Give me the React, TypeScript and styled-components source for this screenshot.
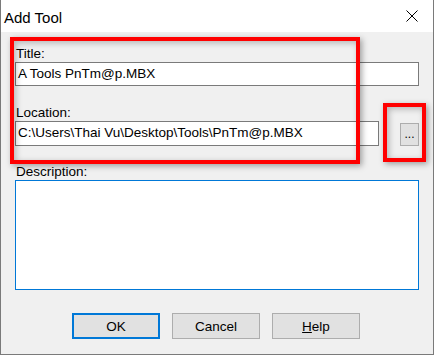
import React from "react";
import styled, { createGlobalStyle } from "styled-components";

const Global = createGlobalStyle`
  html, body { margin: 0; padding: 0; background: #f0f0f0; }
  body { font-family: "Liberation Sans", Arial, sans-serif; }
`;

const Window = styled.div`
  position: relative;
  width: 434px;
  height: 355px;
  box-sizing: border-box;
  border: 1px solid #7a7a7a;
  border-top: none;
  background: #f0f0f0;
  display: flex;
  flex-direction: column;
  overflow: hidden;
`;

const TitleBar = styled.div`
  height: 32px;
  flex: none;
  background: #ffffff;
  display: flex;
  align-items: center;
  justify-content: space-between;
  padding: 0 15px 0 3px;
  box-sizing: border-box;
`;

const TitleText = styled.span`
  font-family: "Liberation Sans", Arial, sans-serif;
  font-size: 15px;
  color: #000;
  padding-top: 2px;
`;

const Body = styled.div`
  flex: 1;
  display: flex;
  flex-direction: column;
  padding: 14px 14px 0 14px;
  font-size: 13.5px;
  color: #000;
`;

const Label = styled.div<{ $gap?: number }>`
  height: 16px;
  line-height: 16px;
  margin-top: ${(p) => p.$gap ?? 0}px;
  padding-left: 1px;
`;

const Row = styled.div`
  display: flex;
  align-items: flex-start;
  gap: 21px;
`;

const TextBox = styled.div<{ $w?: number; $h?: number; $focus?: boolean }>`
  box-sizing: border-box;
  width: ${(p) => (p.$w ? `${p.$w}px` : "100%")};
  height: ${(p) => p.$h ?? 24}px;
  background: #fff;
  border: 1px solid ${(p) => (p.$focus ? "#0078d7" : "#7a7a7a")};
  line-height: 21px;
  padding-left: 2px;
  white-space: nowrap;
  overflow: hidden;
`;

const SmallButton = styled.div`
  box-sizing: border-box;
  width: 19px;
  height: 23px;
  margin-top: 2px;
  background: #e1e1e1;
  border: 1px solid #adadad;
  font-size: 12px;
  text-align: center;
  line-height: 20px;
`;

const ButtonRow = styled.div`
  display: flex;
  justify-content: center;
  gap: 12px;
  margin-top: 23px;
  padding-right: 2px;
`;

const Button = styled.div<{ $default?: boolean }>`
  box-sizing: border-box;
  width: 88px;
  height: 26px;
  background: #e1e1e1;
  border: ${(p) => (p.$default ? "2px solid #0078d7" : "1px solid #adadad")};
  display: flex;
  align-items: center;
  justify-content: center;
`;

const Underline = styled.span`
  text-decoration: underline;
`;

const Highlight = styled.div<{ $x: number; $y: number; $w: number; $h: number }>`
  position: absolute;
  left: ${(p) => p.$x}px;
  top: ${(p) => p.$y}px;
  width: ${(p) => p.$w}px;
  height: ${(p) => p.$h}px;
  box-sizing: border-box;
  border: 4px solid #ff0000;
  box-shadow: 2px 2px 6px rgba(0, 0, 0, 0.35), inset 2px 2px 6px rgba(0, 0, 0, 0.25);
  pointer-events: none;
`;

const CloseIcon = () => (
  <svg width="12" height="12" viewBox="0 0 12 12">
    <path d="M0.5 0.5 L11.5 11.5 M11.5 0.5 L0.5 11.5" stroke="#000" strokeWidth="1" fill="none" />
  </svg>
);

export default function App() {
  return (
    <>
      <Global />
      <Window>
        <TitleBar>
          <TitleText>Add Tool</TitleText>
          <CloseIcon />
        </TitleBar>
        <Body>
          <Label>Title:</Label>
          <TextBox>A Tools PnTm@p.MBX</TextBox>
          <Label $gap={19}>Location:</Label>
          <Row>
            <TextBox $w={364} $h={25}>C:\Users\Thai Vu\Desktop\Tools\PnTm@p.MBX</TextBox>
            <SmallButton>...</SmallButton>
          </Row>
          <Label $gap={18}>Description:</Label>
          <TextBox $h={110} $focus />
          <ButtonRow>
            <Button $default>OK</Button>
            <Button>Cancel</Button>
            <Button>
              <span>
                <Underline>H</Underline>elp
              </span>
            </Button>
          </ButtonRow>
        </Body>
        <Highlight $x={9} $y={37} $w={350} $h={127} />
        <Highlight $x={382} $y={103} $w={43} $h={59} />
      </Window>
    </>
  );
}
